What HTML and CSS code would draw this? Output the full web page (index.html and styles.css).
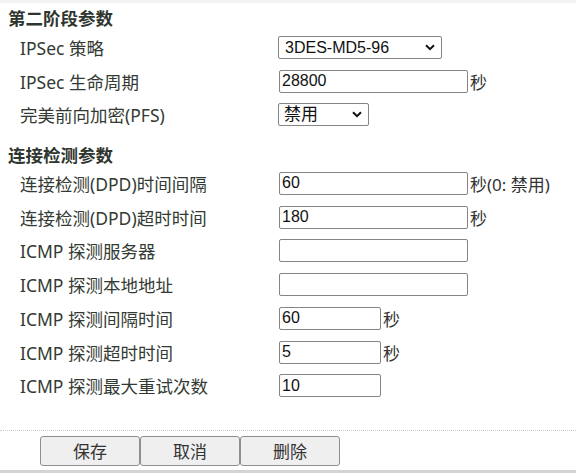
FILE: index.html
```html
<!DOCTYPE html>
<html lang="zh-CN">
<head>
<meta charset="utf-8">
<title>第二阶段参数</title>
<link rel="stylesheet" href="styles.css">
</head>
<body>
<div class="page">
  <div class="top-strip"></div>
  <div class="heading h-first">第二阶段参数</div>
  <div class="row r1">
    <div class="label">IPSec 策略</div>
    <div class="ctrl">
      <span class="sel-wrap">
        <select class="sel sel-wide"><option>3DES-MD5-96</option></select>
        <svg class="chev" width="10" height="7" viewBox="0 0 10 7"><path d="M1 1.2 L5 5.2 L9 1.2" fill="none" stroke="#111" stroke-width="2"/></svg>
      </span>
    </div>
  </div>
  <div class="row r1">
    <div class="label">IPSec 生命周期</div>
    <div class="ctrl"><input class="inp inp-wide" type="text" value="28800"><span class="unit">秒</span></div>
  </div>
  <div class="row r1">
    <div class="label">完美前向加密(PFS)</div>
    <div class="ctrl">
      <span class="sel-wrap">
        <select class="sel sel-narrow"><option>禁用</option></select>
        <svg class="chev" width="10" height="7" viewBox="0 0 10 7"><path d="M1 1.2 L5 5.2 L9 1.2" fill="none" stroke="#111" stroke-width="2"/></svg>
      </span>
    </div>
  </div>

  <div class="heading h-second">连接检测参数</div>
  <div class="row r2">
    <div class="label">连接检测(DPD)时间间隔</div>
    <div class="ctrl"><input class="inp inp-wide" type="text" value="60"><span class="unit">秒(0: 禁用)</span></div>
  </div>
  <div class="row r2">
    <div class="label">连接检测(DPD)超时时间</div>
    <div class="ctrl"><input class="inp inp-wide" type="text" value="180"><span class="unit">秒</span></div>
  </div>
  <div class="row r2">
    <div class="label">ICMP 探测服务器</div>
    <div class="ctrl"><input class="inp inp-wide" type="text" value=""></div>
  </div>
  <div class="row r2">
    <div class="label">ICMP 探测本地地址</div>
    <div class="ctrl"><input class="inp inp-wide" type="text" value=""></div>
  </div>
  <div class="row r2">
    <div class="label">ICMP 探测间隔时间</div>
    <div class="ctrl"><input class="inp inp-short" type="text" value="60"><span class="unit">秒</span></div>
  </div>
  <div class="row r2">
    <div class="label">ICMP 探测超时时间</div>
    <div class="ctrl"><input class="inp inp-short" type="text" value="5"><span class="unit">秒</span></div>
  </div>
  <div class="row r2">
    <div class="label">ICMP 探测最大重试次数</div>
    <div class="ctrl"><input class="inp inp-short" type="text" value="10"></div>
  </div>

  <div class="actions">
    <button class="btn" type="button">保存</button>
    <button class="btn" type="button">取消</button>
    <button class="btn" type="button">删除</button>
  </div>
  <div class="bottom-bar"></div>
</div>
</body>
</html>
```

FILE: styles.css
```css
html, body {
  margin: 0;
  padding: 0;
  background: #ffffff;
}

body {
  font-family: "Noto Sans", "Noto Sans CJK SC", sans-serif;
  font-size: 17.5px;
  color: #333333;
  width: 576px;
  height: 473px;
  overflow: hidden;
}

.page {
  display: flex;
  flex-direction: column;
}

.top-strip {
  height: 3px;
  background: #f2f2f2;
}

.heading {
  font-weight: bold;
  padding-left: 8px;
  display: flex;
  align-items: center;
  color: #2e352e;
}

.h-first {
  height: 28px;
}

.h-second {
  margin-top: 10px;
  height: 25px;
}

.row {
  display: grid;
  grid-template-columns: 278px 1fr;
  align-items: center;
}

.r1 {
  height: 33.5px;
}

.r2 {
  height: 33.75px;
}

.label {
  padding-left: 20px;
  white-space: nowrap;
  color: #333a33;
}

.ctrl {
  display: flex;
  align-items: center;
}

.unit {
  margin-left: 2px;
  white-space: nowrap;
  font-size: 17px;
}

.inp {
  box-sizing: border-box;
  height: 23px;
  margin: 0 0 0 1px;
  padding: 0 2px;
  border: 1px solid #858585;
  border-radius: 2px;
  font-family: "Liberation Sans", Arial, sans-serif;
  font-size: 16px;
  color: #111111;
  background: #ffffff;
  outline: none;
}

.inp-wide {
  width: 189px;
}

.inp-short {
  width: 102px;
}

.sel-wrap {
  position: relative;
  display: inline-flex;
}

.sel {
  -webkit-appearance: none;
  appearance: none;
  box-sizing: border-box;
  height: 23px;
  margin: 0;
  padding: 0 0 0 6px;
  border: 1px solid #858585;
  border-radius: 2px;
  background: #ffffff;
  font-family: "Liberation Sans", "Noto Sans CJK SC", Arial, sans-serif;
  font-size: 16px;
  color: #111111;
  outline: none;
}

.sel-wide {
  width: 164px;
}

.sel-narrow {
  width: 91px;
  padding-left: 5px;
  font-size: 17px;
}

.chev {
  position: absolute;
  right: 7px;
  top: 8px;
  pointer-events: none;
}

.actions {
  margin-top: 27px;
  border-top: 1px dotted #cccccc;
  padding: 5px 0 0 40px;
  display: flex;
  gap: 0;
}

.btn {
  box-sizing: border-box;
  width: 100px;
  height: 30px;
  margin: 0;
  padding: 0;
  border: 1px solid #8f8f8f;
  border-radius: 3px;
  background: #efefef;
  font-family: "Noto Sans CJK SC", sans-serif;
  font-size: 17px;
  color: #333333;
}

.bottom-bar {
  margin-top: 4px;
  height: 4px;
  background: #d4d4d4;
}
```
